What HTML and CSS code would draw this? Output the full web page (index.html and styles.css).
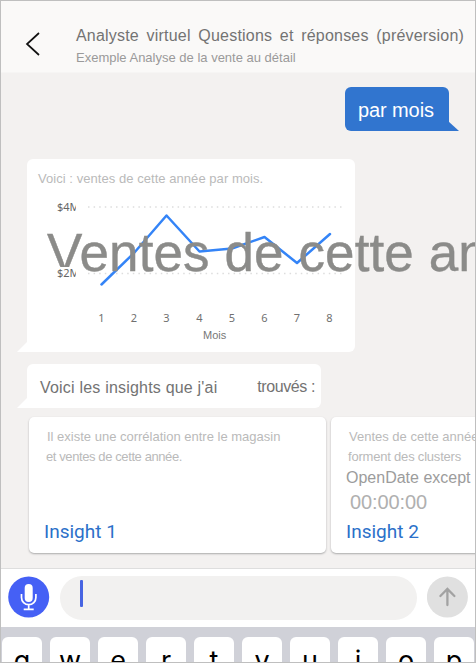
FILE: index.html
```html
<!DOCTYPE html>
<html lang="fr">
<head>
<meta charset="utf-8">
<title>Analyste virtuel Questions et réponses</title>
<link rel="stylesheet" href="styles.css">
</head>
<body>
<div class="phone">
  <header class="header">
    <svg class="back" width="16" height="24" viewBox="0 0 16 24"><path d="M14 1 2 12l12 11" fill="none" stroke="#111" stroke-width="1.7"/></svg>
    <div class="titles">
      <h1 class="title">Analyste virtuel Questions et réponses (préversion)</h1>
      <p class="subtitle">Exemple Analyse de la vente au détail</p>
    </div>
  </header>
  <main class="chat">
    <div class="bubble sent">par mois</div>
    <section class="bubble received chart-bubble">
      <p class="chart-caption">Voici : ventes de cette année par mois.</p>
      <svg class="chart" width="328" height="160" viewBox="27 192 328 160">
        <g stroke="#ddd" stroke-width="1.5" stroke-dasharray="1.5 4.1"><path d="M88 207H343"/><path d="M88 273.500H343"/></g>
        <path d="M101.500 284.500 134 253 166.500 215.500 199.500 251.500 232 248.500 264.500 237 297 263 330 234" fill="none" stroke="#3484f7" stroke-width="2.500" stroke-linejoin="round" stroke-linecap="round"/>
        <g class="ticks" text-anchor="middle">
          <text x="101.500" y="322">1</text><text x="134" y="322">2</text><text x="166.500" y="322">3</text><text x="199.500" y="322">4</text>
          <text x="232" y="322">5</text><text x="264.500" y="322">6</text><text x="297" y="322">7</text><text x="329.500" y="322">8</text>
        </g>
        <text class="axis-title" x="203" y="339">Mois</text>
      </svg>
      <span class="chart-overlay">Ventes de cette année</span>
      <span class="y-label y-top">$4M</span>
      <span class="y-label y-mid">$2M</span>
    </section>
    <div class="bubble received intro"><span class="intro-start">Voici les insights que j'ai</span><span class="intro-end">trouvés :</span></div>
    <div class="cards">
      <article class="card">
        <p class="card-line">Il existe une corrélation entre le magasin</p>
        <p class="card-line second">et ventes de cette année.</p>
        <a class="card-link">Insight 1</a>
      </article>
      <article class="card">
        <p class="card-line">Ventes de cette année</p>
        <p class="card-line clusters">forment des clusters</p>
        <p class="card-field">OpenDate except</p>
        <p class="card-time">00:00:00</p>
        <a class="card-link">Insight 2</a>
      </article>
    </div>
  </main>
  <div class="composer">
    <svg class="round-button" width="42" height="42" viewBox="0 0 42 42">
      <circle cx="20.700" cy="21" r="20.500" fill="#4560f5"/>
      <rect x="16.700" y="8" width="8" height="18" rx="4" fill="#fff"/>
      <path d="M13.500 18v3.500a7.200 7.200 0 0 0 14.400 0V18M20.700 29v4M15.700 33.300h10" fill="none" stroke="#fff" stroke-width="1.700"/>
    </svg>
    <div class="input"><span class="caret"></span></div>
    <svg class="round-button" width="42" height="42" viewBox="0 0 42 42">
      <circle cx="20.400" cy="21" r="20.500" fill="#e0e0e0"/>
      <path d="M20.400 29V13.500M13.400 20l7-7 7 7" fill="none" stroke="#a2a2a2" stroke-width="2.300" stroke-linecap="round"/>
    </svg>
  </div>
  <div class="keyboard">
    <span class="key">q</span><span class="key">w</span><span class="key">e</span><span class="key">r</span><span class="key">t</span><span class="key">y</span><span class="key">u</span><span class="key">i</span><span class="key">o</span><span class="key">p</span>
  </div>
</div>
</body>
</html>
```
FILE: styles.css
```css
* { box-sizing: border-box; }
body, h1, p { margin: 0; }
body { font-family: "Liberation Sans", Arial, sans-serif; overflow: hidden; }
.phone {
  position: relative;
  width: 476px;
  height: 663px;
  display: flex;
  flex-direction: column;
  overflow: hidden;
  background: #f3f1f0;
  white-space: nowrap;
}
.phone::after {
  content: "";
  position: absolute;
  inset: 0;
  border: 1px solid #bfbfbf;
  pointer-events: none;
}
.header { height: 73px; flex: none; display: flex; background: #faf9f8; border-bottom: 1px solid #f6f5f4; }
.back { margin: 32px 0 0 25px; flex: none; }
.titles { margin: 25px 0 0 35px; }
.title { font-size: 16px; line-height: 21px; font-weight: 400; color: #737373; letter-spacing: 0.2px; word-spacing: 3px; }
.subtitle { margin-top: 3px; font-size: 13px; line-height: 17px; color: #9a9a9a; }
.chat { height: 495px; flex: none; display: flex; flex-direction: column; align-items: flex-start; }
.bubble { position: relative; border-radius: 6px; }
.bubble::after { content: ""; position: absolute; bottom: 0; width: 10px; height: 10px; }
.sent {
  align-self: flex-end;
  width: 104px;
  height: 44px;
  margin: 14px 27px 0 0;
  padding-left: 13px;
  line-height: 46px;
  font-size: 20px;
  letter-spacing: -0.1px;
  color: #fff;
  background: #3175cf;
  border-bottom-right-radius: 0;
}
.sent::after { left: 100%; margin-left: -1px; width: 11px; background: #3175cf; clip-path: polygon(0 0, 100% 100%, 0 100%); }
.received { margin-left: 27px; background: #fff; border-bottom-left-radius: 0; }
.received::after { right: 100%; background: #fff; clip-path: polygon(100% 0, 100% 100%, 0 100%); }
.chart-bubble { width: 328px; height: 193px; margin-top: 28px; }
.chart-caption { height: 33px; padding: 11px 0 0 11px; font-size: 13px; line-height: 18px; color: #bababa; letter-spacing: 0.05px; }
.chart { display: block; }
.ticks { font: 11px "Noto Sans", sans-serif; fill: #707070; }
.axis-title { font-size: 11px; fill: #777; }
.chart-overlay { position: absolute; left: 20px; top: 64px; font-size: 53px; line-height: 60px; letter-spacing: 0.1px; color: #8b8b89; -webkit-text-stroke: 0.4px #8b8b89; }
.y-label { position: absolute; left: 30px; width: 19px; height: 12px; overflow: hidden; font: 11px/12px "Noto Sans", sans-serif; color: #666; background: #fff; }
.y-top { top: 42px; }
.y-mid { top: 108px; }
.intro { width: 294px; height: 44px; margin-top: 12px; padding: 0 6px 0 13px; display: flex; justify-content: space-between; line-height: 47px; font-size: 16px; color: #737373; }
.intro-start { letter-spacing: 0.2px; }
.intro-end { line-height: 45px; letter-spacing: -0.4px; }
.cards { display: flex; gap: 5px; margin: 9px 0 0 29px; }
.card { width: 297px; height: 136px; flex: none; display: flex; flex-direction: column; padding: 10px 0 0 15px; border-radius: 5px; background: #fff; box-shadow: 0 1px 2px #aaa; }
.card-line { padding-left: 3px; font-size: 13px; line-height: 20px; color: #bababa; }
.second { padding-left: 2px; letter-spacing: -0.4px; }
.clusters { padding-left: 2px; letter-spacing: -0.2px; }
.card-field { font-size: 16px; line-height: 22px; color: #9c9c9c; }
.card-time { padding-left: 4px; font-size: 20px; line-height: 26px; letter-spacing: -0.1px; color: #b0b0b0; }
.card-link { margin-top: auto; height: 33px; font: 19px/24px Roboto, sans-serif; color: #2b70c9; }
.composer { height: 59px; flex: none; display: flex; align-items: flex-start; padding: 7px 7px 0 8px; border-top: 1px solid #dedede; background: #fff; }
.input { width: 357px; height: 44px; margin: 0 10px; padding: 4px 0 0 20px; border-radius: 22px; background: #f2f1f0; }
.caret { display: block; width: 3px; height: 27px; border-radius: 1px; background: #4764e2; }
.keyboard { height: 36px; flex: none; display: flex; gap: 8px; padding: 10px 0 0 2px; background: #d0d1d8; }
.key { width: 40px; height: 48px; flex: none; border-radius: 6px; background: #fff; font: 27px/48px Inter, sans-serif; text-align: center; color: #000; }
```
